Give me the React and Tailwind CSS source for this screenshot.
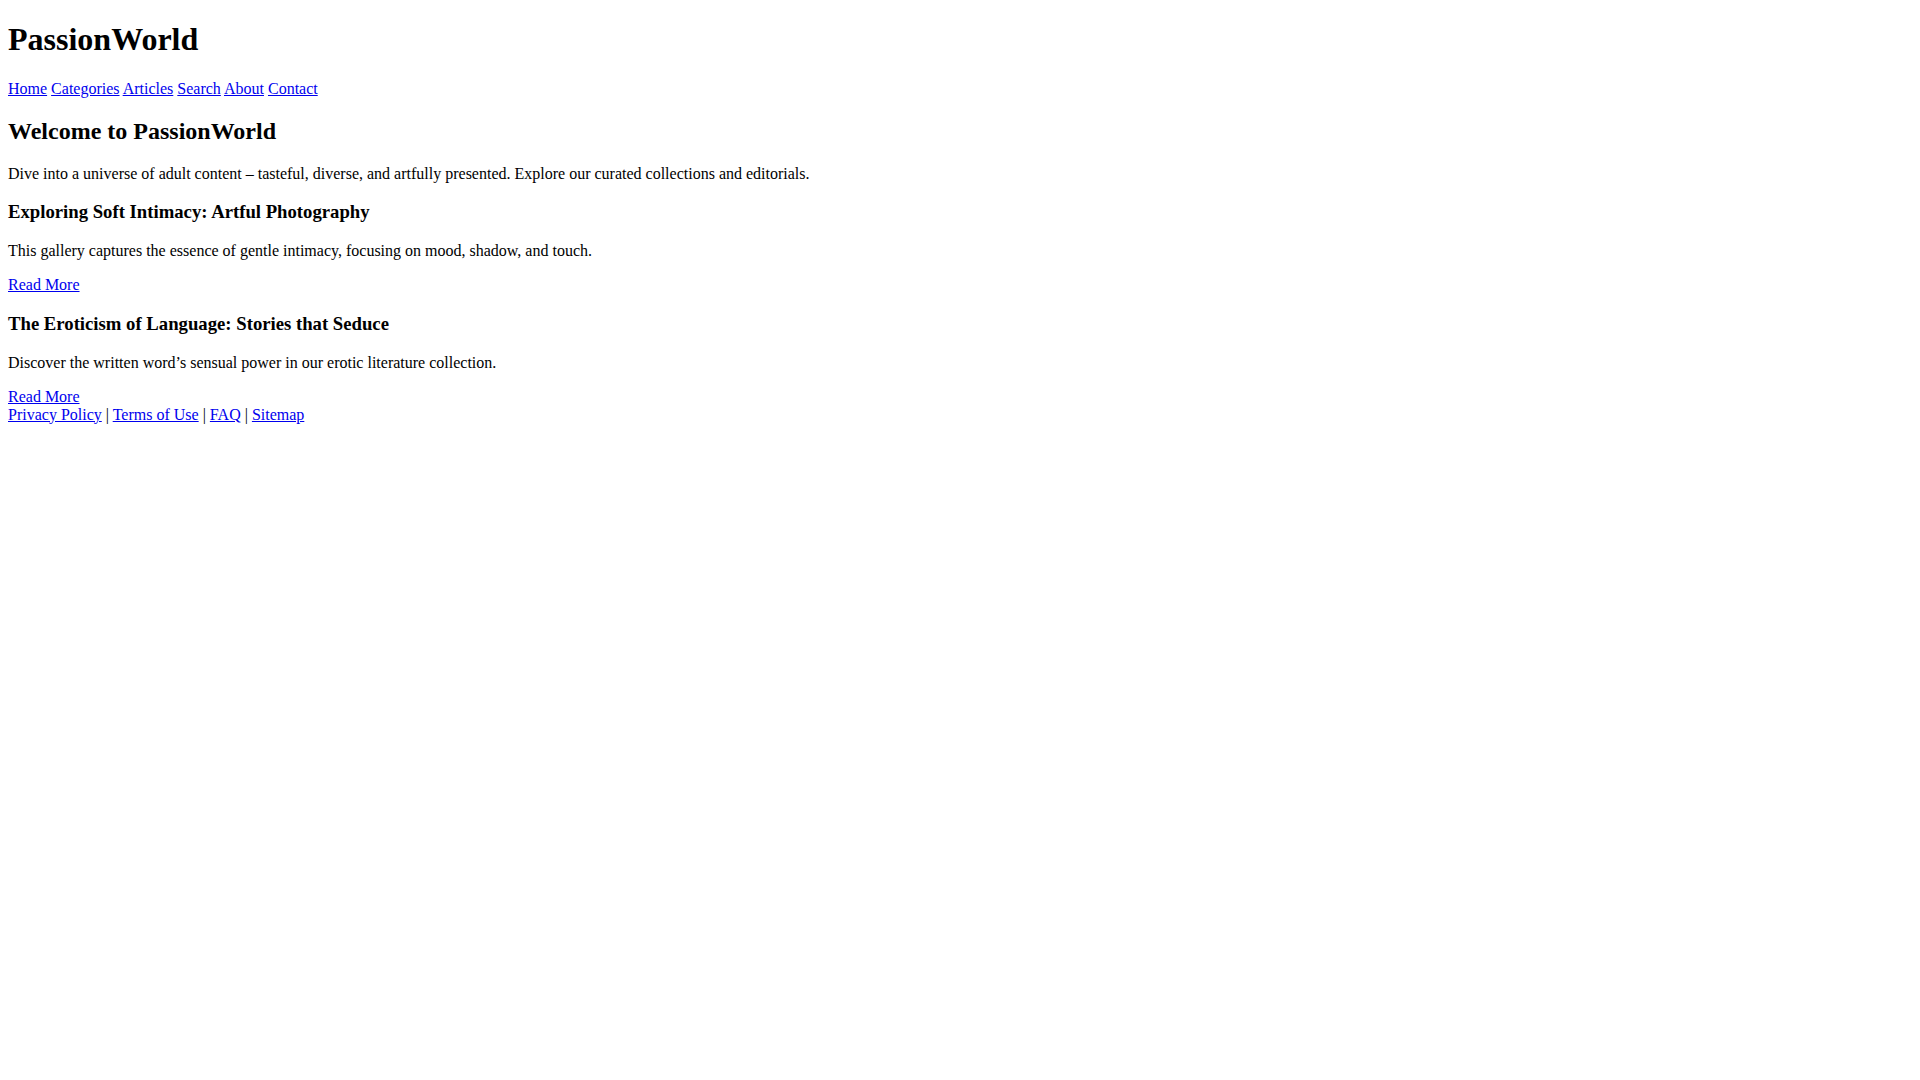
const NAV = ['Home', 'Categories', 'Articles', 'Search', 'About', 'Contact'];

const ARTICLES = [
  {
    title: 'Exploring Soft Intimacy: Artful Photography',
    text: 'This gallery captures the essence of gentle intimacy, focusing on mood, shadow, and touch.',
  },
  {
    title: 'The Eroticism of Language: Stories that Seduce',
    text: 'Discover the written word\u2019s sensual power in our erotic literature collection.',
  },
];

const FOOTER = ['Privacy Policy', 'Terms of Use', 'FAQ', 'Sitemap'];

const link = 'text-[#0000ee] underline';

export default function App() {
  return (
    <div className="min-h-screen bg-white text-black font-['Liberation_Serif','Times_New_Roman',serif] text-[16px] leading-[normal] px-[8px] pb-[8px] pt-[21.44px]">
      <header>
        <h1 className="text-[32px] font-bold mb-[21.44px]">PassionWorld</h1>
        <nav>
          {NAV.map((n, i) => (
            <span key={n}>
              {i > 0 && ' '}
              <a href="#" className={link}>{n}</a>
            </span>
          ))}
        </nav>
      </header>

      <main>
        <h2 className="text-[24px] font-bold mt-[19.92px] mb-[19.92px]">Welcome to PassionWorld</h2>
        <p>Dive into a universe of adult content – tasteful, diverse, and artfully presented. Explore our curated collections and editorials.</p>

        {ARTICLES.map((a) => (
          <article key={a.title}>
            <h3 className="text-[18.72px] font-bold mt-[18.72px] mb-[18.72px]">{a.title}</h3>
            <p className="mb-[16px]">{a.text}</p>
            <a href="#" className={link}>Read More</a>
          </article>
        ))}
      </main>

      <footer>
        {FOOTER.map((f, i) => (
          <span key={f}>
            {i > 0 && ' | '}
            <a href="#" className={link}>{f}</a>
          </span>
        ))}
      </footer>
    </div>
  );
}
